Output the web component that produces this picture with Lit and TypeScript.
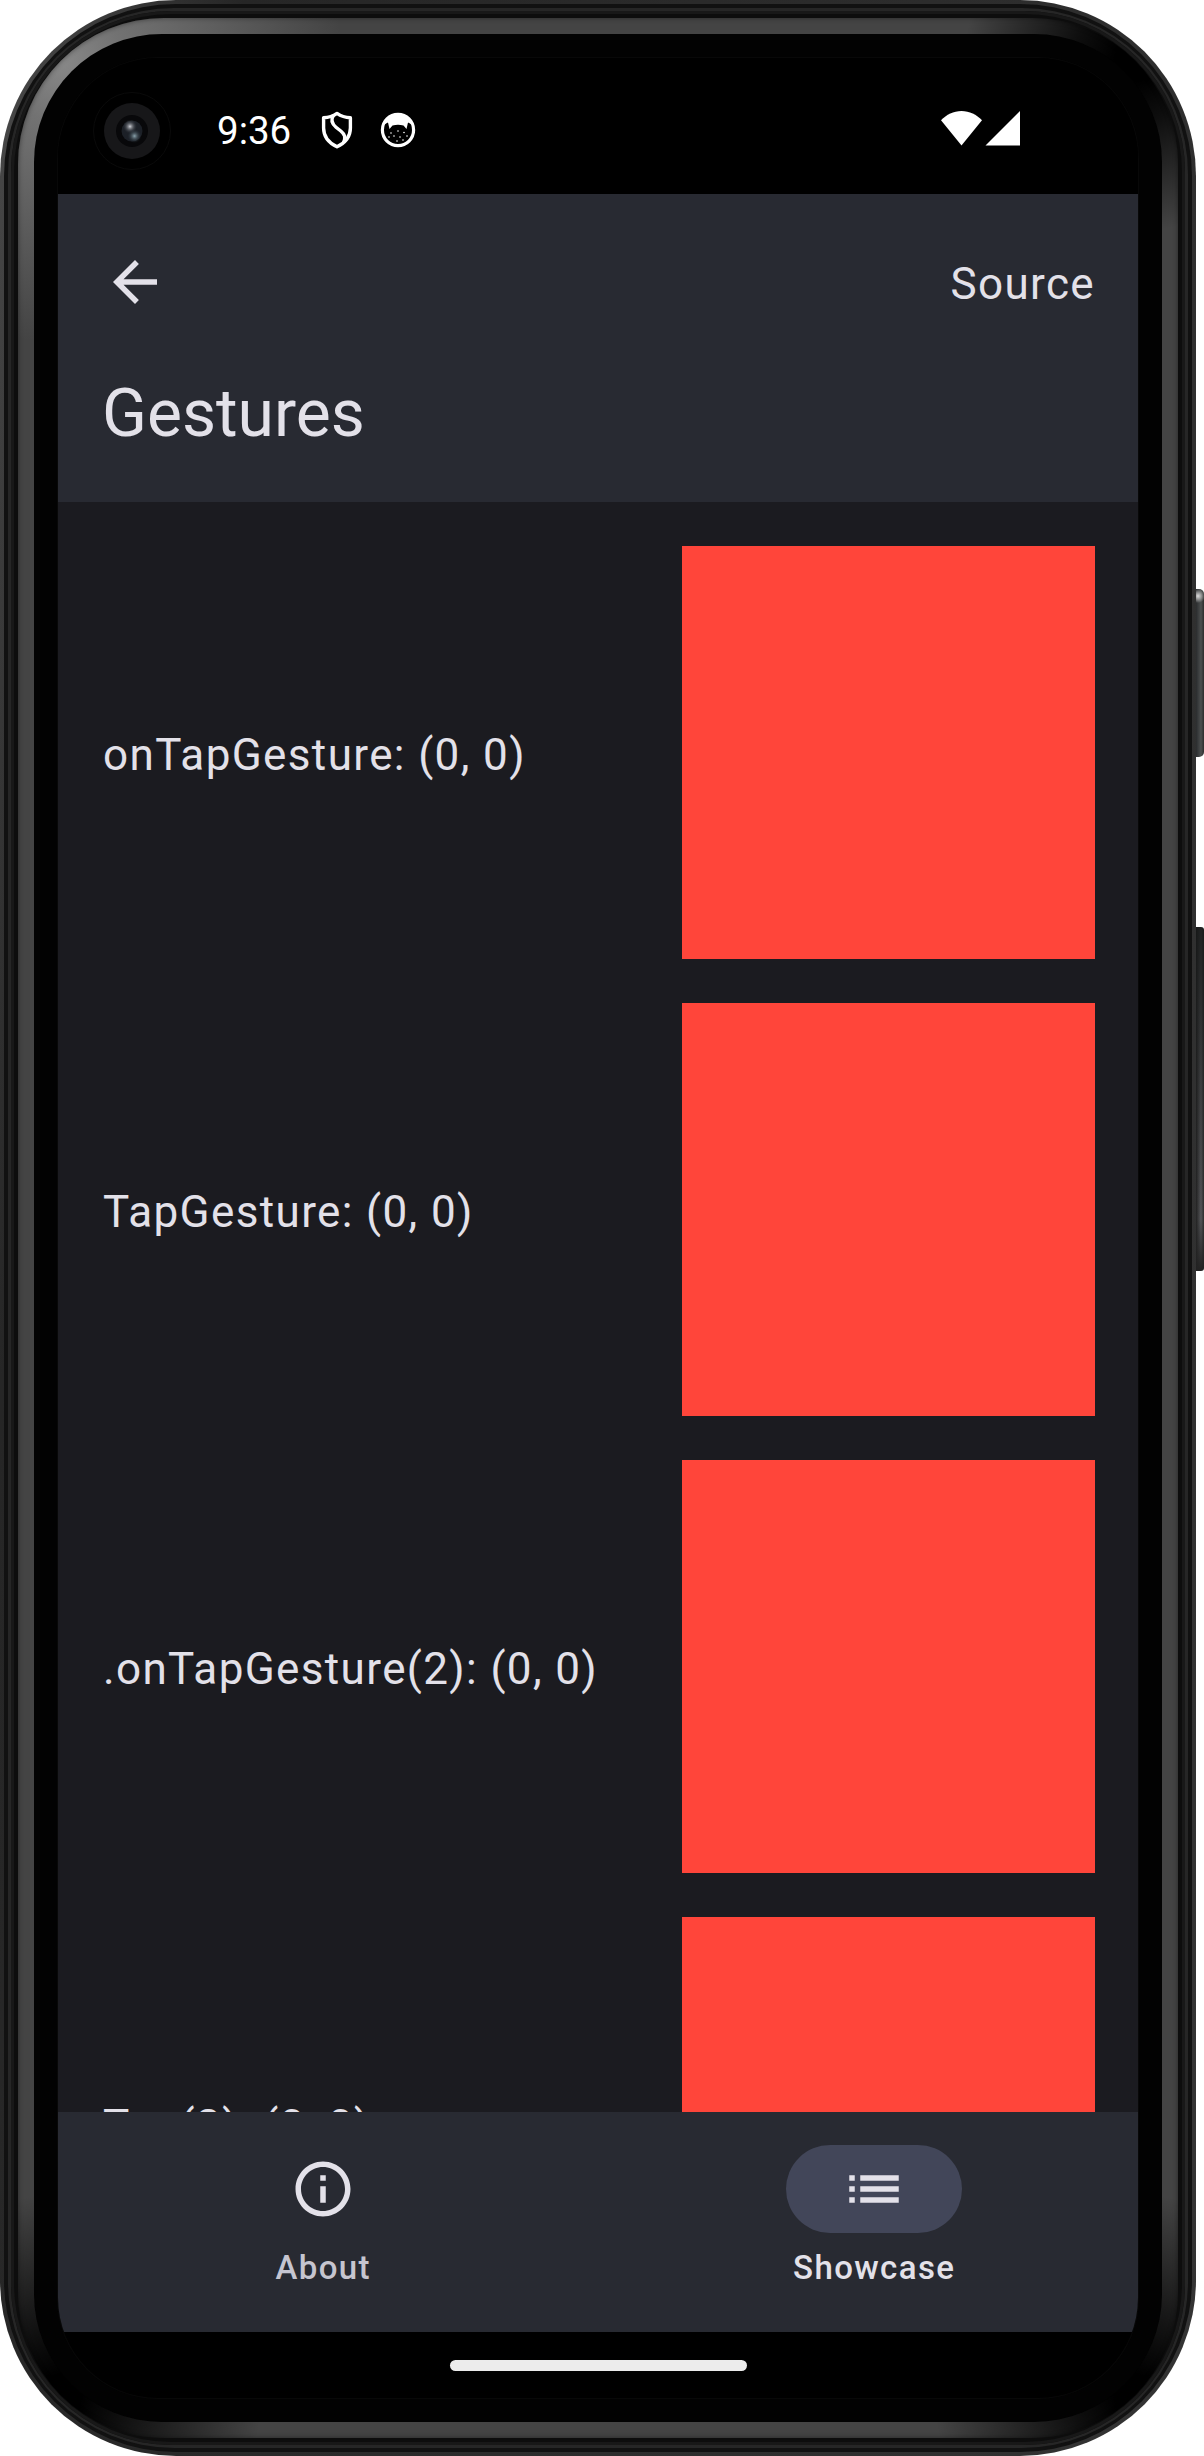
import { LitElement, html, css, svg } from "lit";
import { customElement, property } from "lit/decorators.js";

@customElement("status-bar")
class StatusBar extends LitElement {
  static styles = css`
    :host { display: block; height: 136px; background: #000; }
    .bar { height: 136px; padding: 9px 118px 0 159px; display: flex; align-items: center; justify-content: space-between; box-sizing: border-box; }
    .group { display: flex; align-items: center; }
    .time { font: 400 38.5px/46px Roboto, sans-serif; color: #fff; }
    .shield { margin-left: 30px; margin-top: -2px; }
    .cat { margin-left: 27px; margin-top: -2px; }
    svg { display: block; }
    .signals { margin-top: -4px; }
  `;
  render() {
    return html`<div class="bar">
      <div class="group">
        <span class="time">9:36</span>
        <svg class="shield" width="32" height="38" viewBox="0 0 32 38" fill="none" stroke="#fff" stroke-width="3.4" stroke-linejoin="round">
          <path d="M16 2.4C12 5.2 7.5 6.6 2.6 6.8V17C2.6 25.5 8 32 16 35.8C24 32 29.4 25.5 29.4 17V6.8C24.5 6.6 20 5.2 16 2.4Z" />
          <path d="M12.5 4.2C9.6 9 10.5 12.5 15 16.2L19.8 20C24 23.6 24.8 26 22.6 31.6" />
        </svg>
        <svg class="cat" width="36" height="36" viewBox="0 0 36 36">
          <circle cx="18" cy="18" r="15.6" fill="none" stroke="#fff" stroke-width="3.2" />
          <path d="M3 13C6 5 11 2.500 18 2.500S30 5 33 13L28 10.500L26.500 17L23.500 13.500Q18 11.800 12.500 13.500L9.500 17L8 10.500Z" fill="#fff" />
          ${[[11, 21], [18, 19], [24, 20.500], [14, 24], [20, 25], [27, 24], [17, 29], [9, 25], [23, 28]].map(
            ([x, y]) => svg`<circle cx=${x} cy=${y} r="0.8" fill="#fff" />`,
          )}
        </svg>
      </div>
      <svg class="signals" width="79" height="35" viewBox="0 0 79 35" fill="#fff">
        <path d="M0 9.300C5.500 3.500 12.500 0 20.500 0S35.500 3.500 41 9.300L20.500 34.500Z" />
        <path d="M79 0V34.500H44.500Z" />
      </svg>
    </div>`;
  }
}

@customElement("top-bar")
class TopBar extends LitElement {
  @property() heading = "";
  static styles = css`
    :host { display: block; height: 308px; background: #282a32; color: #e3e1e9; font-family: Roboto, sans-serif; }
    .actions { display: flex; align-items: center; justify-content: space-between; height: 176px; padding: 0 43px 0 44px; box-sizing: border-box; }
    .back { display: block; }
    .source { font-size: 44px; line-height: 66px; letter-spacing: 1.375px; padding-top: 4px; }
    .heading { font-size: 66px; line-height: 88px; padding: 0 44px; margin: 0; font-weight: 400; }
  `;
  render() {
    return html`
      <div class="actions">
        <svg class="back" width="66" height="66" viewBox="0 0 24 24" fill="#e3e1e9"><path d="M20 11H7.830l5.590-5.590L12 4l-8 8 8 8 1.410-1.410L7.830 13H20z" /></svg>
        <span class="source">Source</span>
      </div>
      <h1 class="heading">${this.heading}</h1>`;
  }
}

@customElement("gesture-row")
class GestureRow extends LitElement {
  @property() label = "";
  static styles = css`
    :host { display: flex; align-items: center; justify-content: space-between; height: 413px; flex: none; }
    .label { font: 400 44px/66px Roboto, sans-serif; letter-spacing: 1.375px; color: #e3e1e9; white-space: nowrap; padding: 5px 0 0 1px; }
    .target { width: 413px; height: 413px; background: #ff453a; }
  `;
  render() {
    return html`<span class="label">${this.label}</span><div class="target"></div>`;
  }
}

@customElement("nav-bar")
class NavBar extends LitElement {
  static styles = css`
    :host { display: block; height: 220px; background: #282a32; }
    .tabs { display: flex; gap: 22px; padding-top: 33px; }
    .tab { flex: 1; display: flex; flex-direction: column; align-items: center; gap: 13px; color: #c6c5d0; }
    .tab.active { color: #e3e1e9; }
    .pill { width: 176px; height: 88px; border-radius: 44px; display: flex; align-items: center; justify-content: center; }
    .active .pill { background: #424659; }
    .name { font: 500 33px/44px Roboto, sans-serif; letter-spacing: 1.375px; padding-left: 1.375px; }
  `;
  render() {
    return html`<div class="tabs">
      <div class="tab">
        <div class="pill"><svg width="66" height="66" viewBox="0 0 24 24" fill="#e3e1e9"><path d="M11 7h2v2h-2zm0 4h2v6h-2zm1-9C6.480 2 2 6.480 2 12s4.480 10 10 10 10-4.480 10-10S17.520 2 12 2zm0 18c-4.410 0-8-3.590-8-8s3.590-8 8-8 8 3.590 8 8-3.590 8-8 8z" /></svg></div>
        <span class="name">About</span>
      </div>
      <div class="tab active">
        <div class="pill"><svg width="66" height="66" viewBox="0 0 24 24" fill="#e3e1e9"><path d="M3 13h2v-2H3v2zm0 4h2v-2H3v2zm0-8h2V7H3v2zm4 4h14v-2H7v2zm0 4h14v-2H7v2zM7 7v2h14V7H7z" /></svg></div>
        <span class="name">Showcase</span>
      </div>
    </div>`;
  }
}

@customElement("app-root")
class AppRoot extends LitElement {
  private rows = ["onTapGesture: (0, 0)", "TapGesture: (0, 0)", ".onTapGesture(2): (0, 0)", "Tap(2): (0, 0)"];

  static styles = css`
    :host { display: block; width: 1204px; height: 2456px; background: #fff; position: relative; overflow: hidden; }
    .phone, .phone div { box-sizing: border-box; }
    .phone { width: 1196px; height: 2456px; border-radius: 176px; padding: 4px; background: linear-gradient(100deg, #4a4a4a, #262626 15%, #303030 85%, #343434); position: relative; }
    .groove { height: 100%; border-radius: 172px; padding: 4px; background: #111; }
    .rail { height: 100%; border-radius: 166px; padding: 3px; background: #262626; }
    .gap { height: 100%; border-radius: 161px; padding: 7px; background: #0d0d0d; box-shadow: inset 0 0 0 3px #181818; }
    .ring { height: 100%; border-radius: 146px; padding: 16px; box-shadow: inset 0 0 5px rgba(0,0,0,.45); background:
      radial-gradient(circle at 44px 44px, #888, rgba(130,130,130,.75) 60px, transparent 280px),
      radial-gradient(circle at 1116px 44px, #000 20px, rgba(0,0,0,.8) 60px, transparent 170px),
      radial-gradient(circle at 44px 2376px, #000 20px, rgba(0,0,0,.8) 60px, transparent 200px),
      radial-gradient(circle at 1116px 2376px, #000 20px, rgba(0,0,0,.8) 60px, transparent 200px), #444; }
    .bezel { height: 100%; border-radius: 128px; padding: 24px; background: #020202; }
    .screen { height: 2340px; border-radius: 100px; overflow: hidden; background: #000; display: flex; flex-direction: column; box-shadow: 0 0 0 1px #080808; }
    .list { flex: 1; min-height: 0; overflow: hidden; background: #1b1b20; padding: 44px 43px 44px 44px; display: flex; flex-direction: column; gap: 44px; }
    .home { height: 66px; display: flex; justify-content: center; align-items: center; }
    .handle { width: 297px; height: 11px; border-radius: 6px; background: #ececec; }
    .camera { position: absolute; left: 93px; top: 92px; width: 78px; height: 78px; border-radius: 50%; border: 1px solid #0a0a0a; display: flex; align-items: center; justify-content: center; }
    .key { position: absolute; left: 1196px; width: 8px; border-radius: 0 5px 5px 0; }
    .power { top: 589px; height: 168px; background: radial-gradient(ellipse 7px 7px at 2px 7px, #ddd, transparent), linear-gradient(90deg, #2a2c2e, #4c4f4f 5px, #2c2c2c); }
    .volume { top: 927px; height: 344px; border-radius: 0 3px 3px 0; background: linear-gradient(rgba(20,22,22,.8), rgba(20,22,22,.3) 50%, transparent 85%, #222), linear-gradient(90deg, #222, #555659 5px, #2c2c2c); }
  `;

  render() {
    return html`
      <div class="phone">
        <div class="groove"><div class="rail"><div class="gap"><div class="ring"><div class="bezel">
          <div class="screen">
            <status-bar></status-bar>
            <top-bar heading="Gestures"></top-bar>
            <div class="list">${this.rows.map((r) => html`<gesture-row label=${r}></gesture-row>`)}</div>
            <nav-bar></nav-bar>
            <div class="home"><div class="handle"></div></div>
          </div>
        </div></div></div></div></div>
        <div class="camera">
          <svg width="56" height="56" viewBox="0 0 56 56">
            <defs>
              <radialGradient id="hi"><stop offset="0" stop-color="#d0d2d8" /><stop offset="1" stop-color="#30353c" stop-opacity="0" /></radialGradient>
              <radialGradient id="lo"><stop offset="0" stop-color="#8ba3ad" /><stop offset="1" stop-color="#263038" stop-opacity="0" /></radialGradient>
            </defs>
            <circle cx="28" cy="28" r="28" fill="#171719" />
            <circle cx="28" cy="28" r="16" fill="#08080a" />
            <circle cx="28" cy="28" r="10.500" fill="#1c2027" />
            <circle cx="26" cy="23.500" r="7" fill="url(#hi)" />
            <circle cx="30.500" cy="33" r="7" fill="url(#lo)" />
          </svg>
        </div>
      </div>
      <div class="key power"></div>
      <div class="key volume"></div>`;
  }
}
